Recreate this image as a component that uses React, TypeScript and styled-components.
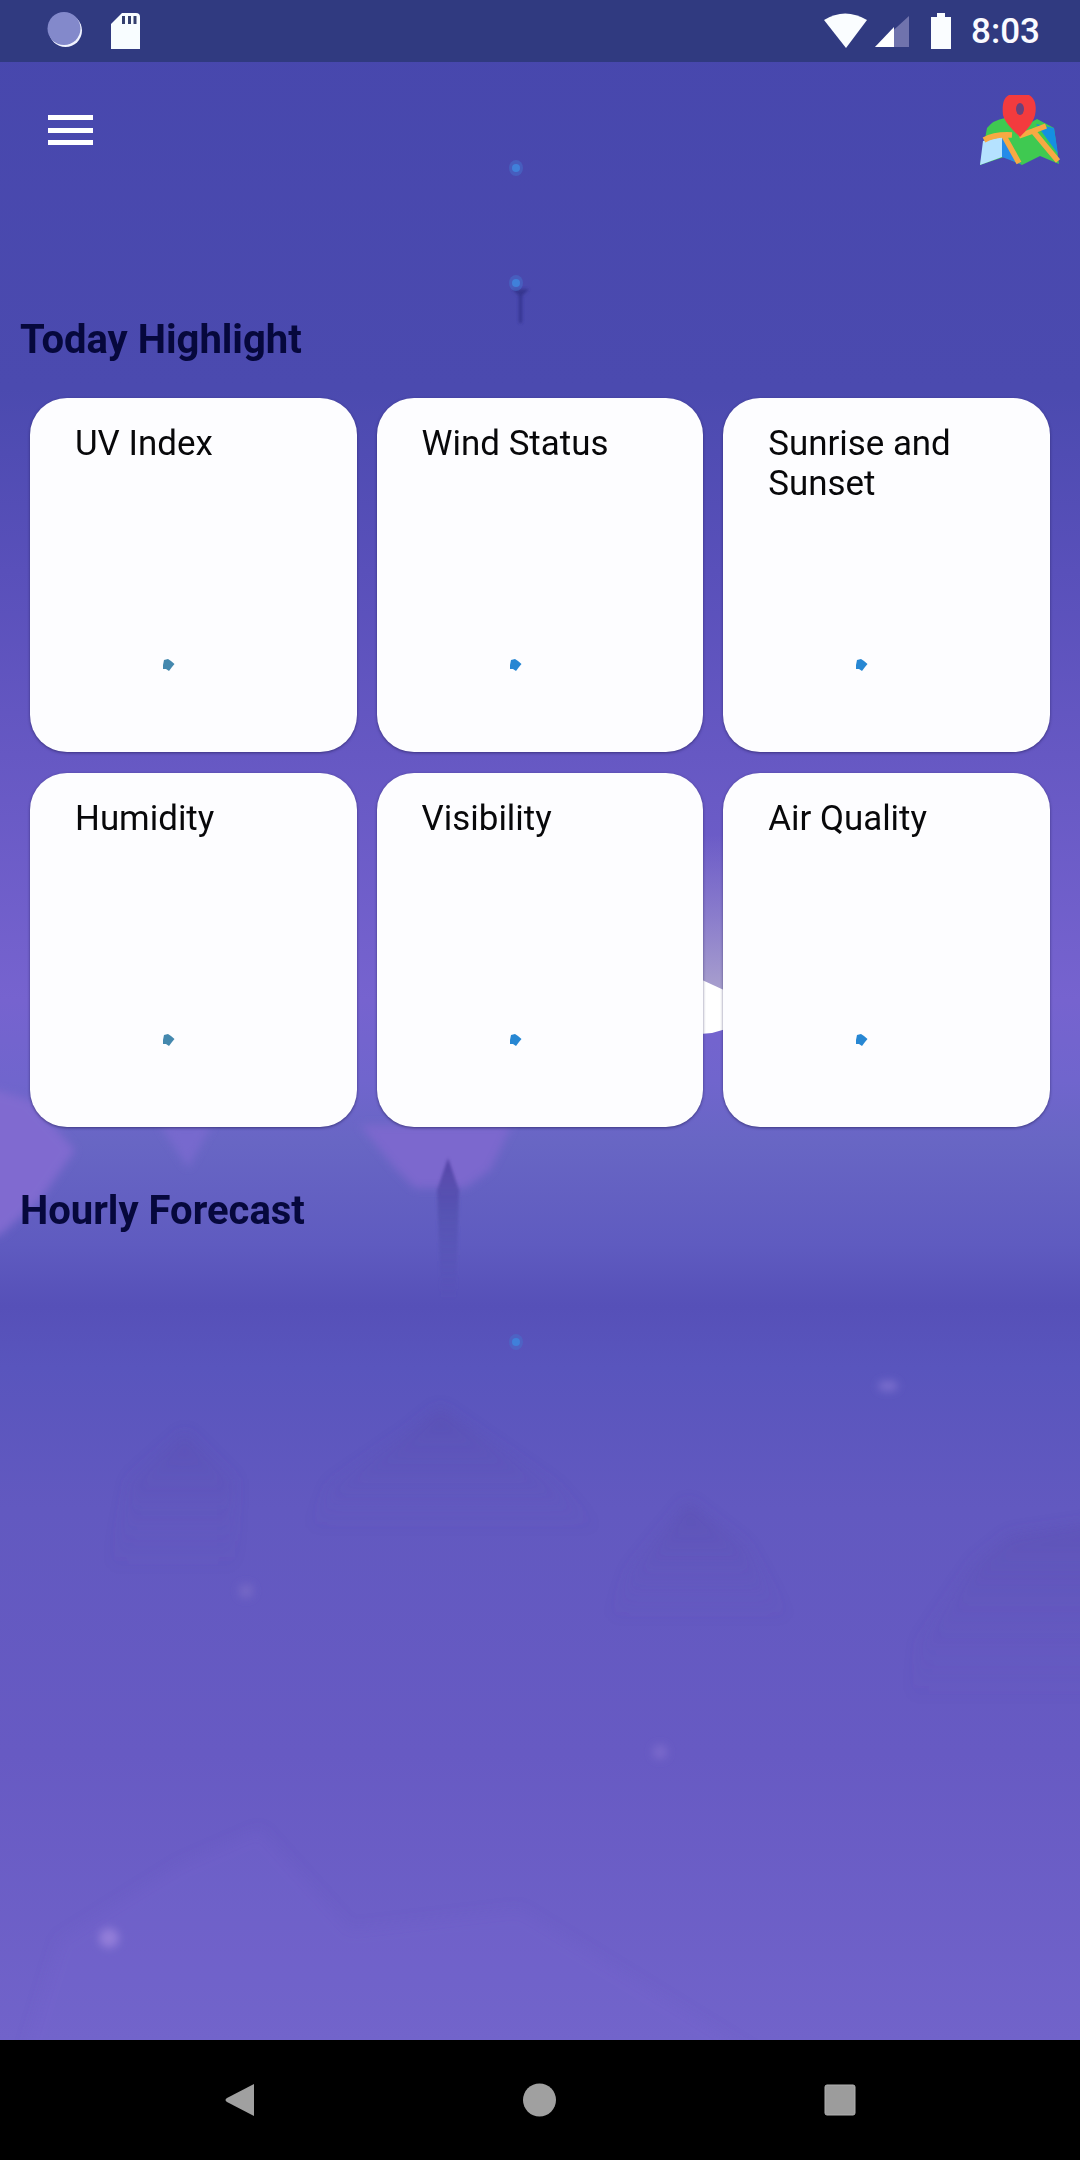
import React from "react";
import styled, { createGlobalStyle } from "styled-components";

const GlobalStyle = createGlobalStyle`
  * { box-sizing: border-box; }
  body { margin: 0; background: #000; }
`;

const Screen = styled.div`
  position: relative;
  display: flex;
  flex-direction: column;
  width: 1080px;
  height: 2160px;
  overflow: hidden;
  font-family: Roboto, "Liberation Sans", sans-serif;
  color: #0a0a12;
`;

const Backdrop = styled.svg`
  position: absolute;
  inset: 0;
  width: 1080px;
  height: 2040px;
`;

const StatusBar = styled.header`
  position: relative;
  display: flex;
  justify-content: space-between;
  height: 62px;
  padding: 0 40px 0 47px;
  background: #303a80;
`;

const StatusGroup = styled.div<{ $gap: number }>`
  display: flex;
  align-items: center;
  gap: ${(p) => p.$gap}px;
`;

const Clock = styled.span`
  margin-left: 5px;
  padding-top: 2px;
  color: #fafaff;
  font-size: 35px;
  font-weight: 500;
  line-height: 60px;
`;

const AppBar = styled.div`
  position: relative;
  display: flex;
  justify-content: space-between;
  align-items: center;
  height: 138px;
  padding: 0 19px 0 48px;
`;

const MenuButton = styled.button`
  display: flex;
  flex-direction: column;
  gap: 7.5px;
  width: 45px;
  padding: 0 0 2px;
  border: 0;
  background: none;
`;

const MenuLine = styled.span`
  height: 5px;
  background: #fff;
`;

const MapButton = styled.button`
  display: flex;
  padding: 0;
  border: 0;
  background: none;
`;

const Main = styled.main`
  position: relative;
  flex: 1;
  display: flex;
  flex-direction: column;
`;

const LoaderRow = styled.div<{ $height: number; $top: number }>`
  display: flex;
  justify-content: center;
  height: ${(p) => p.$height}px;
  padding: ${(p) => p.$top}px 49px 0 0;
`;

const Heading = styled.h2`
  margin: 0;
  padding-left: 20px;
  height: 46px;
  color: #06083c;
  font-size: 40px;
  font-weight: 700;
  line-height: 46px;
`;

const Grid = styled.section`
  display: grid;
  grid-template-columns: repeat(3, 326.6px);
  grid-auto-rows: 354px;
  gap: 21px 20px;
  margin: 35px 0 61px;
  padding-left: 30px;
`;

const Card = styled.article`
  display: flex;
  flex-direction: column;
  justify-content: space-between;
  padding: 26px 40px 80px 45px;
  border-radius: 37px;
  background: #fdfdff;
  box-shadow: 0 1px 3px rgba(30, 25, 80, 0.6);
`;

const CardTitle = styled.h3`
  margin: 0;
  color: #08080a;
  font-size: 34.9px;
  font-weight: 400;
  line-height: 40px;
`;

const Spinner = styled.svg`
  flex: none;
  display: block;
`;

const BarSpinner = styled.div`
  align-self: flex-end;
  margin: 0 41px 24px 0;
`;

const CardSpinner = styled(Spinner)`
  margin-left: 86px;
`;

const NavBar = styled.nav`
  position: relative;
  display: flex;
  justify-content: space-between;
  align-items: center;
  height: 120px;
  padding: 0 224px 0 224px;
  background: #000;
`;

const metrics = [
  { title: "UV Index", tint: "#4488ae" },
  { title: "Wind Status", tint: "#2787d3" },
  { title: "Sunrise and Sunset", tint: "#2787d3" },
  { title: "Humidity", tint: "#4488ae" },
  { title: "Visibility", tint: "#2787d3" },
  { title: "Air Quality", tint: "#2787d3" },
];

const Scenery = () => (
  <Backdrop viewBox="0 0 1080 2040">
    <defs>
      <linearGradient id="sky" x1="0" y1="0" x2="0" y2="1">
        <stop offset="0" stopColor="#4747ad" />
        <stop offset=".19" stopColor="#4b4aaf" />
        <stop offset=".28" stopColor="#5950ba" />
        <stop offset=".37" stopColor="#6658c3" />
        <stop offset=".49" stopColor="#7663cf" />
        <stop offset=".53" stopColor="#7065cd" />
        <stop offset=".56" stopColor="#6866c4" />
        <stop offset=".61" stopColor="#5f5bc0" />
        <stop offset=".64" stopColor="#5650b8" />
        <stop offset=".67" stopColor="#5955bd" />
        <stop offset=".74" stopColor="#6259c0" />
        <stop offset=".86" stopColor="#675ac3" />
        <stop offset="1" stopColor="#7163ca" />
      </linearGradient>
      <linearGradient id="beam" x1="0" y1="0" x2="0" y2="1">
        <stop offset="0" stopColor="#9c90cc" stopOpacity="0" />
        <stop offset="1" stopColor="#aaa2cd" />
      </linearGradient>
      <linearGradient id="tower" x1="0" y1="0" x2="0" y2="1">
        <stop offset="0" stopColor="#5544a8" />
        <stop offset=".4" stopColor="#514fae" stopOpacity=".7" />
        <stop offset="1" stopColor="#504caf" stopOpacity="0" />
      </linearGradient>
      <linearGradient id="hill" x1="0" y1="0" x2="0" y2="1">
        <stop offset="0" stopColor="#574aaa" stopOpacity=".4" />
        <stop offset="1" stopColor="#6257bb" stopOpacity="0" />
      </linearGradient>
      <filter id="soft" x="-50%" y="-50%" width="200%" height="200%">
        <feGaussianBlur stdDeviation="4" />
      </filter>
      <filter id="haze" x="-50%" y="-50%" width="200%" height="200%">
        <feGaussianBlur stdDeviation="7" />
      </filter>
      <filter id="edge" x="-50%" y="-10%" width="200%" height="120%">
        <feGaussianBlur stdDeviation="1.5" />
      </filter>
    </defs>
    <rect width="1080" height="2040" fill="url(#sky)" />
    <g filter="url(#soft)">
      <path d="M-20 1085 L30 1100 L75 1150 L40 1200 L0 1235 L-20 1240Z" fill="#806bd0" />
      <path d="M160 1125 H212 L188 1168Z" fill="#7769ce" />
      <path d="M360 1125 H512 L490 1170 L465 1188 H415 L395 1168Z" fill="#7c68ce" />
      <circle cx="109" cy="1938" r="10" fill="#9a83dc" />
      <circle cx="246" cy="1591" r="7" fill="#7669c6" />
      <circle cx="660" cy="1752" r="7" fill="#7b6bcc" />
      <ellipse cx="888" cy="1386" rx="10" ry="5" fill="#7d70cf" />
    </g>
    <g filter="url(#haze)">
      <path d="M330 1485 L405 1435 L440 1408 L480 1435 L555 1485 L600 1530 H310Z" fill="url(#hill)" />
      <path d="M130 1480 L185 1432 L235 1480 V1570 H110Z" fill="url(#hill)" opacity=".7" />
      <path d="M630 1570 L688 1502 L745 1545 L790 1620 H610Z" fill="url(#hill)" />
      <path d="M920 1640 L975 1562 L1010 1535 L1110 1520 V1700 H910Z" fill="url(#hill)" opacity=".8" />
      <path d="M20 2070 L60 1940 L180 1865 L260 1830 L350 1930 L520 1910 L780 2070Z" fill="#766ad1" opacity=".2" />
    </g>
    <path d="M437 1190 L448 1158 L459 1190 L456 1300 H441Z" fill="url(#tower)" filter="url(#edge)" />
    <rect x="700" y="835" width="26" height="160" fill="url(#beam)" />
    <path d="M700 979 L726 991 V1029 L712 1033 L700 1034Z" fill="#fff" />
    <path d="M512 289 h17 l-7 7 v27 h-3 v-27Z" fill="#34348f" filter="url(#edge)" />
  </Backdrop>
);

const MapIcon = () => (
  <svg width="82" height="74" viewBox="0 0 82 74">
    <path d="M8 34 Q14 26 26 24 L42 34 L58 25 L75 34 L80 70 L61 62 L43 71 L25 63 L1 71Z" fill="#3fc951" />
    <path d="M4 47 L23 43 V63 L1 71Z" fill="#b5e2ff" />
    <path d="M23 43 L42 70 L23 63Z" fill="#268be8" />
    <path d="M57 30 L75 34 L79 60Z" fill="#1490e2" />
    <path d="M5 46 Q16 40 33 41 M25 42 L40 69 M40 42 L54 37 L67 32 M54 37 L79 67" fill="none" stroke="#f8a943" strokeWidth="5.5" />
    <path d="M30 1 H50 C56 4 58 12 56 21 C54 29 48 36 41 43 C34 36 26 29 24 21 C23 12 24 4 30 1Z" fill="#f33b3e" />
    <ellipse cx="41" cy="15" rx="4" ry="6" fill="#69427d" />
  </svg>
);

const Dot = ({ tint }: { tint: string }) => (
  <CardSpinner width="14" height="14" viewBox="0 0 14 14">
    <path d="M3 2 L7 1 L10 3 L13.5 6 L11 9 L8 13 L5 11 L2 11 L2 7Z" fill={tint} />
  </CardSpinner>
);

const FaintDot = () => (
  <Spinner width="16" height="16" viewBox="0 0 16 16">
    <ellipse cx="8" cy="8" rx="7" ry="8" fill="#4572cd" opacity=".5" />
    <circle cx="8" cy="8" r="4" fill="#4080da" />
  </Spinner>
);

export default function App() {
  return (
    <Screen>
      <GlobalStyle />
      <Scenery />
      <StatusBar>
        <StatusGroup $gap={26}>
          <svg width="38" height="38" viewBox="0 0 38 38">
            <circle cx="18.5" cy="18.5" r="16.5" fill="#f1f4ff" />
            <circle cx="17" cy="16.5" r="16.5" fill="#8389cb" />
          </svg>
          <svg width="30" height="38" viewBox="0 0 30 38">
            <path d="M11 1 H25 Q29 1 29 5 V37 H0 V12Z" fill="#f8fdff" />
            <path d="M12.5 4 V12 M18.5 4 V12 M24 4 V12" stroke="#34406f" strokeWidth="3" />
          </svg>
        </StatusGroup>
        <StatusGroup $gap={8}>
          <svg width="43" height="38" viewBox="0 0 43 38">
            <path d="M0 8 Q21 -5 43 8 L22 36Z" fill="#fafdff" />
          </svg>
          <svg width="34" height="34" viewBox="0 0 34 34">
            <path d="M0 33 L34 2 V33Z" fill="#7073ad" />
            <path d="M0 33 L19 13 V33Z" fill="#fff" />
          </svg>
          <svg width="41" height="38" viewBox="0 0 41 38">
            <path d="M20 1 H28 V5 H34 V37 H14 V5 H20Z" fill="#fafdff" />
          </svg>
          <Clock>8:03</Clock>
        </StatusGroup>
      </StatusBar>
      <AppBar>
        <MenuButton aria-label="Menu">
          <MenuLine />
          <MenuLine />
          <MenuLine />
        </MenuButton>
        <BarSpinner>
          <FaintDot />
        </BarSpinner>
        <MapButton aria-label="Map">
          <MapIcon />
        </MapButton>
      </AppBar>
      <Main>
        <LoaderRow $height={117} $top={75}>
          <FaintDot />
        </LoaderRow>
        <Heading>Today Highlight</Heading>
        <Grid>
          {metrics.map((m) => (
            <Card key={m.title}>
              <CardTitle>{m.title}</CardTitle>
              <Dot tint={m.tint} />
            </Card>
          ))}
        </Grid>
        <Heading>Hourly Forecast</Heading>
        <LoaderRow $height={200} $top={100}>
          <FaintDot />
        </LoaderRow>
      </Main>
      <NavBar>
        <svg width="32" height="36" viewBox="0 0 32 36">
          <path d="M30 2 V34 L3 20 Q0 18 3 16Z" fill="#a0a0a0" />
        </svg>
        <svg width="34" height="34" viewBox="0 0 34 34">
          <circle cx="16.5" cy="17" r="16.5" fill="#a0a0a0" />
        </svg>
        <svg width="32" height="32" viewBox="0 0 32 32">
          <rect x="1" y="1" width="30" height="30" rx="2" fill="#9c9c9c" stroke="#b0b0b0" />
        </svg>
      </NavBar>
    </Screen>
  );
}
